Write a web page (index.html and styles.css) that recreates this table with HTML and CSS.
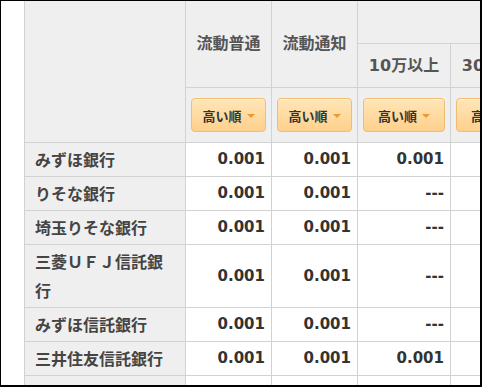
FILE: index.html
```html
<!DOCTYPE html>
<html lang="ja">
<head>
<meta charset="utf-8">
<title>金利一覧</title>
<link rel="stylesheet" href="styles.css">
</head>
<body>
<div class="frame">
  <table class="rates">
    <colgroup>
      <col class="c-name">
      <col class="c-flow">
      <col class="c-flow">
      <col class="c-term">
      <col class="c-term">
      <col class="c-term">
      <col class="c-term">
    </colgroup>
    <thead>
      <tr class="h1">
        <th rowspan="3" class="corner"></th>
        <th rowspan="2">流動普通</th>
        <th rowspan="2">流動通知</th>
        <th colspan="4">定期預金</th>
      </tr>
      <tr class="h2">
        <th>10万以上</th>
        <th>30万以上</th>
        <th>50万以上</th>
        <th>100万以上</th>
      </tr>
      <tr class="h3">
        <th><button class="sort">高い順<span class="caret"></span></button></th>
        <th><button class="sort">高い順<span class="caret"></span></button></th>
        <th><button class="sort">高い順<span class="caret"></span></button></th>
        <th><button class="sort">高い順<span class="caret"></span></button></th>
        <th><button class="sort">高い順<span class="caret"></span></button></th>
        <th><button class="sort">高い順<span class="caret"></span></button></th>
      </tr>
    </thead>
    <tbody>
      <tr><th class="bank">みずほ銀行</th><td>0.001</td><td>0.001</td><td>0.001</td><td>0.001</td><td>0.001</td><td>0.001</td></tr>
      <tr><th class="bank">りそな銀行</th><td>0.001</td><td>0.001</td><td>---</td><td>---</td><td>---</td><td>---</td></tr>
      <tr><th class="bank">埼玉りそな銀行</th><td>0.001</td><td>0.001</td><td>---</td><td>---</td><td>---</td><td>---</td></tr>
      <tr><th class="bank">三菱ＵＦＪ信託銀行</th><td>0.001</td><td>0.001</td><td>---</td><td>---</td><td>---</td><td>---</td></tr>
      <tr><th class="bank">みずほ信託銀行</th><td>0.001</td><td>0.001</td><td>---</td><td>---</td><td>---</td><td>---</td></tr>
      <tr><th class="bank">三井住友信託銀行</th><td>0.001</td><td>0.001</td><td>0.001</td><td>0.001</td><td>0.001</td><td>0.001</td></tr>
      <tr><th class="bank">野村信託銀行</th><td>0.001</td><td>0.001</td><td>0.001</td><td>0.001</td><td>0.001</td><td>0.001</td></tr>
    </tbody>
  </table>
</div>
</body>
</html>
```

FILE: styles.css
```css
html, body {
  margin: 0;
  padding: 0;
  background: #fff;
}

.frame {
  box-sizing: border-box;
  width: 482px;
  height: 387px;
  border-style: solid;
  border-color: #000;
  border-width: 1px 2px 2px 1px;
  padding-left: 23px;
  overflow: hidden;
  background: #fff;
}

.rates {
  border-collapse: collapse;
  table-layout: fixed;
  width: 619px;
  margin-top: -1px;
  font-family: "DejaVu Sans", "Noto Sans CJK JP", sans-serif;
  font-size: 16px;
  font-weight: bold;
}

.c-name { width: 161px; }
.c-flow { width: 86px; }
.c-term { width: 93px; }

.rates th,
.rates td {
  border: 1px solid #d2d2d2;
}

.rates thead th {
  background: #efefef;
  color: #555;
  text-align: center;
  vertical-align: middle;
  padding: 0 5px;
  font-family: "DejaVu Sans", "Noto Sans CJK JP", sans-serif;
  font-size: 16px;
  line-height: 20px;
}

.h1 th { height: 42px; }
.h2 th { height: 43px; }
.h3 th { height: 54px; }

.sort {
  box-sizing: border-box;
  display: flex;
  align-items: center;
  justify-content: center;
  gap: 5px;
  width: 100%;
  height: 34px;
  padding: 0;
  margin: 0;
  border: 1px solid #f1bd72;
  border-radius: 4px;
  background: linear-gradient(#ffe6b8, #ffd08c);
  color: #333;
  font-family: "Noto Sans CJK JP", sans-serif;
  font-size: 13px;
  font-weight: bold;
  box-shadow: inset 0 1px 0 rgba(255, 255, 255, 0.5);
}

.caret {
  width: 0;
  height: 0;
  border-left: 4px solid transparent;
  border-right: 4px solid transparent;
  border-top: 4px solid #ef9a2c;
  margin-top: 1px;
}

.rates tbody th.bank {
  background: #efefef;
  color: #444;
  text-align: left;
  padding: 2px 10px;
  line-height: 29px;
  font-family: "Noto Sans CJK JP", sans-serif;
  font-size: 16px;
  vertical-align: middle;
}

.rates tbody td {
  background: #fff;
  color: #333;
  text-align: right;
  padding: 2px 6px;
  line-height: 29px;
  font-family: "DejaVu Sans", sans-serif;
  font-size: 15px;
  vertical-align: middle;
}
```
